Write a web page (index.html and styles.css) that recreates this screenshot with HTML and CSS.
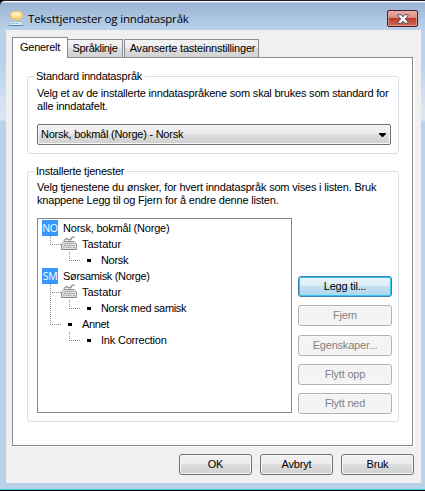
FILE: index.html
```
<!DOCTYPE html>
<html lang="no">
<head>
<meta charset="utf-8">
<title>Teksttjenester og inndataspråk</title>
<link rel="stylesheet" href="styles.css">
</head>
<body>
<svg class="defs" width="0" height="0" aria-hidden="true">
  <symbol id="keyboard" viewBox="0 0 16 16">
    <path d="M3 5C4 2.500 5.500 2.300 7 3.300S10 4 10.500 2.200S12.500 1 13.500 1.500" fill="none" stroke="#999" stroke-width="1.500"/>
    <path d="M3 5.500H13L15.500 8V13.500H.5V8Z" fill="#dedede" stroke="#929292"/>
    <path d="M3.500 7.500H13M2.500 9.500H14M2.500 11.500H4M5 11.500H11M12 11.500H14" stroke="#999" stroke-dasharray="1.300 .7"/>
    <path d="M1 13.500H15" stroke="#858585"/>
  </symbol>
</svg>
<div class="window">
  <header class="titlebar">
    <svg class="app-icon" width="16" height="18" viewBox="0 0 16 18">
      <path d="M1.500 11.500H12.500L13.500 13V15.500H.5V13Z" fill="#dcebf4" stroke="#9fc0da"/>
      <path d="M2 13.500H10" stroke="#86aecd" stroke-dasharray="1.500 .8"/>
      <path d="M0 15.500H14" stroke="#4c83b1"/>
      <ellipse cx="7.500" cy="5.300" rx="6.500" ry="4.200" fill="#fbd779" stroke="#efb64e" stroke-width=".7"/>
      <path d="M5 8.500L6.500 12L9 9Z" fill="#f8c45b"/>
      <ellipse cx="7" cy="4.300" rx="4.800" ry="2.400" fill="#fff0bc"/>
    </svg>
    <h1 class="title">Teksttjenester og inndataspråk</h1>
    <button class="close" aria-label="Lukk">
      <svg width="12" height="10" viewBox="0 0 12 10"><path d="M1 .7H4.200L6 2.800L7.800 .7H11V2L8.300 5L11 8V9.300H7.800L6 7.200L4.200 9.300H1V8L3.700 5L1 2Z" fill="#f5f5f5" stroke="#555765"/></svg>
    </button>
  </header>
  <main class="client">
    <nav class="tabs">
      <button class="tab active">Generelt</button>
      <button class="tab tab-bar">Språklinje</button>
      <button class="tab tab-adv">Avanserte tasteinnstillinger</button>
    </nav>
    <section class="panel">
      <section class="group default-language">
        <h2 class="legend">Standard inndataspråk</h2>
        <p>Velg et av de installerte inndataspråkene som skal brukes som standard for<br>alle inndatafelt.</p>
        <button class="combo"><span>Norsk, bokmål (Norge) - Norsk</span><svg width="7" height="4" viewBox="0 0 7 4"><path d="M0 0H7V1L4 4H3L0 1Z"/></svg></button>
      </section>
      <section class="group services">
        <h2 class="legend">Installerte tjenester</h2>
        <p>Velg tjenestene du ønsker, for hvert inndataspråk som vises i listen. Bruk<br>knappene Legg til og Fjern for å endre denne listen.</p>
        <div class="service-row">
          <div class="tree">
            <div class="row"><b class="lang">NO</b><span>Norsk, bokmål (Norge)</span></div>
            <div class="row"><i class="branch end"></i><svg class="kbd" width="16" height="16"><use href="#keyboard"/></svg><span class="loose">Tastatur</span></div>
            <div class="row"><i class="gap"></i><i class="branch end"></i><i class="dot"></i><span class="tight">Norsk</span></div>
            <div class="row"><b class="lang">SM</b><span class="tight">Sørsamisk (Norge)</span></div>
            <div class="row"><i class="branch"></i><svg class="kbd" width="16" height="16"><use href="#keyboard"/></svg><span class="loose">Tastatur</span></div>
            <div class="row"><i class="gap through"></i><i class="branch end"></i><i class="dot"></i><span class="tight">Norsk med samisk</span></div>
            <div class="row"><i class="branch end"></i><i class="dot"></i><span class="tight">Annet</span></div>
            <div class="row"><i class="gap"></i><i class="branch end"></i><i class="dot"></i><span>Ink Correction</span></div>
          </div>
          <div class="actions">
            <button class="btn primary">Legg til...</button>
            <button class="btn" disabled>Fjern</button>
            <button class="btn" disabled>Egenskaper...</button>
            <button class="btn" disabled>Flytt opp</button>
            <button class="btn" disabled>Flytt ned</button>
          </div>
        </div>
      </section>
    </section>
    <footer class="footer">
      <button class="btn">OK</button>
      <button class="btn">Avbryt</button>
      <button class="btn">Bruk</button>
    </footer>
  </main>
</div>
</body>
</html>
```
FILE: styles.css
```
* { box-sizing: border-box; }
body {
  margin: 0;
  width: 425px;
  height: 491px;
  overflow: hidden;
  background: #000;
  font: 11px/13px "Liberation Sans", Arial, sans-serif;
  letter-spacing: -.2px;
  color: #000;
}
h1, h2, p { margin: 0; font-weight: normal; }
button { margin: 0; padding: 0; font: inherit; letter-spacing: inherit; color: inherit; white-space: nowrap; }
.defs { display: block; }
.window {
  height: 490px;
  padding: 0 4px 6px 6px;
  border-top: 1px solid #24222c;
  border-bottom: 1px solid #36c4db;
  border-radius: 5px 0 0 0;
  background: linear-gradient(#f1f5fa 0 1px, #9ab5d3 2px, #bad1ea 29px, #bad1ea 60px, #dce9f6 118px, #bad1ea 121px);
}
.titlebar { display: flex; height: 29px; align-items: flex-start; padding: 0 3px; }
.app-icon { margin: 9px 3px 0 0; }
.title {
  flex: 1;
  margin-top: 9px;
  font: 11.500px/18px "Open Sans", "Noto Sans", sans-serif;
  letter-spacing: -.17px;
  white-space: nowrap;
}
.close {
  display: flex;
  align-items: center;
  justify-content: center;
  width: 31px;
  height: 17px;
  margin-top: 9px;
  border: 1px solid #49192a;
  border-radius: 2px;
  background: linear-gradient(#e9afa6, #d98679 48%, #ba3b29 50%, #d36d58);
  box-shadow: inset 0 0 0 1px #eeb5ab99;
}
.client { height: 453px; padding: 7px 6px 0; background: #f0f0f0; }
.tabs { display: flex; align-items: flex-end; height: 20px; }
.tab {
  height: 18px;
  border: 1px solid #898c95;
  border-bottom: 0;
  border-left: 0;
  background: linear-gradient(#f3f3f3, #ebebeb 48%, #dddddd 50%, #d2d2d2);
}
.tab.active { position: relative; height: 21px; width: 56px; margin-bottom: -1px; padding-bottom: 2px; border-left: 1px solid #898c95; background: #fff; letter-spacing: -.3px; }
.tab-bar { width: 55px; letter-spacing: -.35px; }
.tab-adv { width: 135px; margin-left: 1px; padding-left: 2px; border-left: 1px solid #898c95; }
.panel {
  width: 401px;
  height: 389px;
  padding: 18px 14px 0;
  border: 1px solid #898c95;
  background: #fff;
  box-shadow: 2px 1px #fff;
}
.group { width: 372px; border: 1px solid #d5dfe5; border-radius: 3px; padding: 0 7px 0 9px; }
.default-language { height: 78px; }
.services { height: 251px; margin-top: 17px; }
.legend {
  width: max-content;
  margin: -7px 0 0 -3px;
  padding: 0 3px 0 2px;
  background: #fff;
  font-size: 11px;
  line-height: 13px;
  letter-spacing: -.22px;
  white-space: nowrap;
}
.group p { margin-top: 4px; white-space: nowrap; }
.services p { margin-top: 3px; }
.combo {
  display: flex;
  align-items: center;
  justify-content: space-between;
  width: 354px;
  height: 21px;
  margin-top: 11px;
  padding: 0 4px 0 3px;
  border: 1px solid #707070;
  border-radius: 2px;
  background: linear-gradient(#f2f2f2, #ebebeb 48%, #dddddd 50%, #cfcfcf);
  box-shadow: inset 0 0 0 1px #f8f8f8;
  letter-spacing: -.24px;
}
.service-row { display: flex; gap: 6px; margin-top: 11px; }
.service-row > * { flex: none; }
.tree { width: 255px; height: 195px; padding: 1px 4px; border: 1px solid #828790; background: #fff; }
.row { display: flex; height: 16px; align-items: center; white-space: nowrap; }
.row > * { flex: none; }
.loose { letter-spacing: 0; }
.tight { letter-spacing: -.33px; }
.lang { width: 16px; height: 16px; margin-right: 5px; background: #3399ff; color: #fff; font: 10.500px/16px "Open Sans", sans-serif; text-align: center; letter-spacing: -.4px; }
.kbd, .dot { width: 16px; height: 16px; margin-right: 5px; }
.dot { background: linear-gradient(#000, #000) 7px 7px / 4px 3px no-repeat; }
.gap { width: 19px; height: 16px; }
.branch { width: 11px; height: 16px; margin-left: 8px;
  background:
    repeating-linear-gradient(#888 0 1px, transparent 1px 2px) 0 0 / 1px 16px no-repeat,
    repeating-linear-gradient(90deg, #888 0 1px, transparent 1px 2px) 0 8px / 11px 1px no-repeat;
}
.branch.end {
  background:
    repeating-linear-gradient(#888 0 1px, transparent 1px 2px) 0 0 / 1px 9px no-repeat,
    repeating-linear-gradient(90deg, #888 0 1px, transparent 1px 2px) 0 8px / 11px 1px no-repeat;
}
.through { background: repeating-linear-gradient(#888 0 1px, transparent 1px 2px) 8px 0 / 1px 16px no-repeat; }
.actions { display: grid; grid-template-rows: 21px 21px 21px 21px 21px; row-gap: 8.300px; width: 94px; padding-top: 58px; }
.btn {
  height: 21px;
  border: 1px solid #707070;
  border-radius: 3px;
  background: linear-gradient(#f2f2f2, #ebebeb 48%, #dddddd 50%, #cfcfcf);
  box-shadow: inset 0 0 0 1px #f8f8f8;
}
.btn:disabled { border-color: #adb2b5; background: #f4f4f4; color: #838383; }
.btn.primary {
  border-color: #3c7fb1;
  background: linear-gradient(#e9f4fa, #d9edf7 48%, #bfe1f2 50%, #add7ed);
  box-shadow: inset 0 0 0 1px #36c5f3;
}
.footer { display: flex; justify-content: flex-end; gap: 8px; padding: 8px 1px 0 0; }
.footer .btn { width: 73px; }
```
